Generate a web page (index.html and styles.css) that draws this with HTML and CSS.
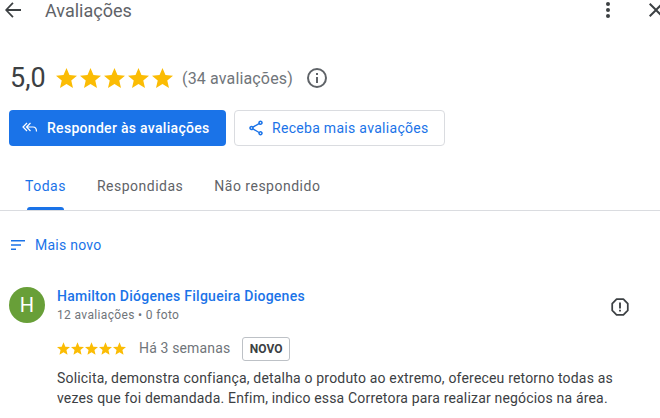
FILE: index.html
```html
<!DOCTYPE html>
<html lang="pt">
<head>
    <meta charset="UTF-8">
    <meta name="viewport" content="width=device-width, initial-scale=1.0">
    <title>Avaliações</title>
    <link rel="stylesheet" href="styles.css">
</head>
<body>
    <svg class="defs" width="0" height="0">
        <symbol id="star" viewBox="2 2 20 19"><path d="M12 17.270 18.180 21l-1.640-7.030L22 9.240l-7.190-.61L12 2 9.190 8.630 2 9.240l5.460 4.730L5.820 21z"/></symbol>
    </svg>
    <div class="page">
        <header class="topbar">
            <svg class="back-icon" width="24" height="24" viewBox="0 0 24 24"><path d="M20 11.100H7.200l5.400-5.500L11.300 4.300 4 12l7.300 7.700 1.300-1.300-5.400-5.500H20z"/></svg>
            <span class="topbar-title">Avaliações</span>
            <svg class="more-icon" width="24" height="24" viewBox="0 0 24 24"><circle cx="12" cy="6" r="2"/><circle cx="12" cy="12" r="2"/><circle cx="12" cy="18" r="2"/></svg>
            <svg class="close-icon" width="24" height="24" viewBox="0 0 24 24"><path d="M19 6.400 17.600 5 12 10.600 6.400 5 5 6.400 10.600 12 5 17.600 6.400 19 12 13.400 17.600 19 19 17.600 13.400 12z"/></svg>
        </header>

        <section class="summary">
            <span class="score">5,0</span>
            <span class="stars stars-big">
                <svg><use href="#star"/></svg>
                <svg><use href="#star"/></svg>
                <svg><use href="#star"/></svg>
                <svg><use href="#star"/></svg>
                <svg><use href="#star"/></svg>
            </span>
            <span class="count">(34 avaliações)</span>
            <svg class="info-icon" width="24" height="24" viewBox="0 0 24 24"><path d="M11 7h2v2h-2zm0 4h2v6h-2zm1-9a10 10 0 1 0 0 20 10 10 0 0 0 0-20zm0 18a8 8 0 1 1 0-16 8 8 0 0 1 0 16z"/></svg>
        </section>

        <div class="actions">
            <button class="btn btn-primary" type="button">
                <svg width="18" height="18" viewBox="0 0 18 18" fill="none" stroke="currentColor" stroke-width="1.2"><path d="M6 4 2 8l4 4M9.500 4l-4 4 4 4M5.500 8H12c2.200 0 3.500 1.500 3.500 4.500"/></svg>
                Responder às avaliações
            </button>
            <button class="btn btn-outline" type="button">
                <svg width="18" height="18" viewBox="0 0 24 24"><path d="M18 16.100c-.8 0-1.500.3-2 .8l-7.100-4.200c.1-.2.100-.5.100-.7s0-.5-.1-.7L16 7.200c.5.500 1.200.8 2 .8 1.700 0 3-1.300 3-3s-1.300-3-3-3-3 1.300-3 3c0 .2 0 .5.100.7L8 9.800C7.500 9.300 6.800 9 6 9c-1.700 0-3 1.300-3 3s1.300 3 3 3c.8 0 1.500-.3 2-.8l7.100 4.200c-.1.200-.1.400-.1.600 0 1.600 1.300 2.900 3 2.900s3-1.300 3-2.900-1.300-2.900-3-2.900zM18 4c.6 0 1 .4 1 1s-.4 1-1 1-1-.4-1-1 .4-1 1-1zM6 13c-.6 0-1-.4-1-1s.4-1 1-1 1 .4 1 1-.4 1-1 1zm12 7c-.6 0-1-.4-1-1s.4-1 1-1 1 .4 1 1-.4 1-1 1z" fill="currentColor"/></svg>
                Receba mais avaliações
            </button>
        </div>

        <nav class="tabs">
            <a class="tab active">Todas</a>
            <a class="tab">Respondidas</a>
            <a class="tab">Não respondido</a>
        </nav>

        <div class="sort">
            <svg width="18" height="18" viewBox="0 0 18 18"><path d="M1 4h14v1.500H1zM1 8.200h10v1.500H1zM1 12.500h5V14H1z" fill="currentColor"/></svg>
            Mais novo
        </div>

        <article class="review">
            <div class="avatar">H</div>
            <div class="review-body">
                <div class="review-head">
                    <div>
                        <div class="author">Hamilton Diógenes Filgueira Diogenes</div>
                        <div class="author-meta">12 avaliações • 0 foto</div>
                    </div>
                    <svg class="flag-icon" width="22" height="22" viewBox="0 0 24 24"><path d="M15.700 3.500H8.300L3.500 8.300v7.400l4.800 4.800h7.400l4.800-4.800V8.300z" fill="none" stroke="currentColor" stroke-width="1.900" stroke-linejoin="round"/><path d="M11 7h2v6.500h-2zm0 8h2v2h-2z" fill="currentColor"/></svg>
                </div>
                <div class="review-rating">
                    <span class="stars stars-small">
                        <svg><use href="#star"/></svg>
                        <svg><use href="#star"/></svg>
                        <svg><use href="#star"/></svg>
                        <svg><use href="#star"/></svg>
                        <svg><use href="#star"/></svg>
                    </span>
                    <span class="when">Há 3 semanas</span>
                    <span class="badge">NOVO</span>
                </div>
                <p class="review-text">Solicita, demonstra confiança, detalha o produto ao extremo, ofereceu retorno todas as vezes que foi demandada. Enfim, indico essa Corretora para realizar negócios na área.</p>
            </div>
        </article>
    </div>
</body>
</html>
```

FILE: styles.css
```css
html, body {
    margin: 0;
    padding: 0;
    background: #fff;
    overflow: hidden;
}
body {
    font-family: Roboto, "Liberation Sans", sans-serif;
    color: #3c4043;
}
.defs {
    display: block;
}
.page {
    width: 660px;
    height: 418px;
    overflow: hidden;
}
.topbar {
    display: flex;
    align-items: center;
    height: 20px;
    padding-left: 1px;
    width: 667px;
}
.topbar svg {
    flex: none;
    fill: #3c4043;
}
.topbar-title {
    margin-left: 20px;
    font-size: 18px;
    color: #5f6368;
    flex: 1;
}
.more-icon {
    margin-right: 24px;
}
.summary {
    display: flex;
    align-items: center;
    height: 36px;
    margin-top: 40px;
    padding-left: 10px;
}
.score {
    width: 36px;
    font-size: 27px;
    color: #3c4043;
}
.stars {
    display: flex;
    fill: #fbbc04;
}
.stars-big {
    gap: 3px;
    margin-left: 10px;
}
.stars-big svg {
    width: 21px;
    height: 20px;
}
.count {
    font-size: 16px;
    letter-spacing: 0.15px;
    color: #70757a;
    margin-left: 9px;
}
.info-icon {
    margin-left: 12px;
    fill: #5f6368;
}
.actions {
    display: flex;
    gap: 8px;
    margin-top: 14px;
    padding-left: 9px;
}
.btn {
    display: flex;
    align-items: center;
    height: 36px;
    box-sizing: border-box;
    border-radius: 4px;
    font-family: inherit;
    font-size: 14px;
    font-weight: 500;
    letter-spacing: 0.3px;
    padding: 0 12px;
    gap: 8px;
    cursor: pointer;
}
.btn-primary {
    width: 217px;
    background: #1a73e8;
    border: none;
    color: #fff;
}
.btn-outline {
    width: 211px;
    background: #fff;
    border: 1px solid #dadce0;
    color: #1a73e8;
    font-weight: 400;
    gap: 7px;
}
.tabs {
    display: flex;
    gap: 31px;
    height: 65px;
    padding-left: 25px;
    border-bottom: 1px solid #dadce0;
    box-sizing: border-box;
}
.tab {
    position: relative;
    display: flex;
    align-items: center;
    height: 64px;
    box-sizing: border-box;
    padding-top: 16px;
    font-size: 14px;
    color: #5f6368;
    letter-spacing: 0.5px;
}
.tab.active {
    color: #1a73e8;
}
.tab.active::after {
    content: "";
    position: absolute;
    left: 2px;
    right: 2px;
    bottom: 0;
    height: 3px;
    background: #1a73e8;
    border-radius: 3px 3px 0 0;
}
.sort {
    display: flex;
    align-items: center;
    gap: 7px;
    height: 20px;
    margin-top: 24px;
    padding-left: 10px;
    font-size: 14px;
    letter-spacing: 0.25px;
    color: #1a73e8;
}
.review {
    display: flex;
    gap: 12px;
    margin-top: 32px;
    padding-left: 9px;
    padding-right: 29px;
}
.avatar {
    flex: none;
    width: 36px;
    height: 36px;
    border-radius: 50%;
    background: #689f38;
    color: #fff;
    font-size: 20px;
    display: flex;
    align-items: center;
    justify-content: center;
}
.review-body {
    flex: 1;
}
.review-head {
    display: flex;
    justify-content: space-between;
    align-items: center;
}
.author {
    font-size: 14px;
    font-weight: 500;
    color: #1a73e8;
    letter-spacing: 0.26px;
    line-height: 18px;
}
.author-meta {
    font-size: 12px;
    color: #70757a;
    letter-spacing: 0.35px;
    line-height: 18px;
    margin-top: 1px;
}
.flag-icon {
    color: #3c4043;
    margin-top: 2px;
}
.review-rating {
    display: flex;
    align-items: center;
    height: 24px;
    margin-top: 12px;
}
.stars-small {
    gap: 1px;
}
.stars-small svg {
    width: 13px;
    height: 13px;
}
.when {
    font-size: 14px;
    color: #70757a;
    letter-spacing: 0.15px;
    margin-left: 13px;
}
.badge {
    margin: 2px 0 0 12px;
    border: 1px solid #bdc1c6;
    border-radius: 3px;
    padding: 0 6.500px;
    font-size: 12px;
    font-weight: 700;
    line-height: 22px;
    color: #3c4043;
}
.review-text {
    margin: 8px 0 0;
    font-size: 14px;
    letter-spacing: 0.18px;
    line-height: 20px;
    color: #3c4043;
}
```
